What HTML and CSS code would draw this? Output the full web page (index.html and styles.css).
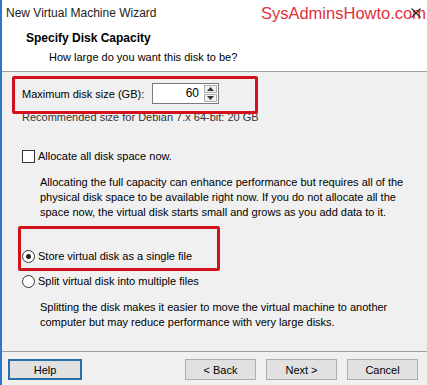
FILE: index.html
```html
<!DOCTYPE html>
<html lang="en">
<head>
    <meta charset="UTF-8">
    <title>New Virtual Machine Wizard</title>
    <link rel="stylesheet" href="styles.css">
</head>
<body>
    <div class="window">
        <!-- Header -->
        <div class="header">
            <div class="titlebar">
                <span class="title">New Virtual Machine Wizard</span>
                <span class="watermark">SysAdminsHowto.com</span>
                <svg class="close" width="10" height="10" viewBox="0 0 10 10">
                    <path d="M0.5 0.5 L9.5 9.5 M9.5 0.5 L0.5 9.5" stroke="#222" stroke-width="1.1" fill="none"/>
                </svg>
            </div>
            <div class="heading">Specify Disk Capacity</div>
            <div class="subheading">How large do you want this disk to be?</div>
        </div>

        <!-- Content -->
        <div class="content">
            <div class="size-row">
                <span>Maximum disk size (GB):</span>
                <div class="spin">
                    <div class="spin-value">60</div>
                    <div class="spin-buttons">
                        <div class="spin-btn">
                            <svg width="7" height="4" viewBox="0 0 7 4"><path d="M0 4 L3.5 0 L7 4 Z" fill="#333"/></svg>
                        </div>
                        <div class="spin-btn">
                            <svg width="7" height="4" viewBox="0 0 7 4"><path d="M0 0 L3.5 4 L7 0 Z" fill="#333"/></svg>
                        </div>
                    </div>
                </div>
            </div>
            <p class="recommend">Recommended size for Debian 7.x 64-bit: 20 GB</p>

            <label class="option check-option">
                <span class="checkbox"></span>
                <span>Allocate all disk space now.</span>
            </label>
            <p class="note">Allocating the full capacity can enhance performance but requires all of the physical disk space to be available right now. If you do not allocate all the space now, the virtual disk starts small and grows as you add data to it.</p>

            <label class="option radio-first">
                <span class="radio checked"></span>
                <span>Store virtual disk as a single file</span>
            </label>
            <label class="option">
                <span class="radio"></span>
                <span>Split virtual disk into multiple files</span>
            </label>
            <p class="note">Splitting the disk makes it easier to move the virtual machine to another computer but may reduce performance with very large disks.</p>
        </div>

        <!-- Buttons -->
        <div class="footer">
            <button class="btn btn-help">Help</button>
            <div class="footer-right">
                <button class="btn">&lt; Back</button>
                <button class="btn">Next &gt;</button>
                <button class="btn">Cancel</button>
            </div>
        </div>

        <!-- Annotation boxes -->
        <div class="mark mark-size"></div>
        <div class="mark mark-single"></div>
    </div>
</body>
</html>
```

FILE: styles.css
```css
body {
    margin: 0;
    font-family: "Liberation Sans", Arial, sans-serif;
    font-size: 11px;
    color: #000;
    background: #f0f0f0;
}

.window {
    position: relative;
    width: 427px;
    height: 385px;
    border-left: 2px solid #2b79c6;
    box-sizing: border-box;
    background: #f0f0f0;
    overflow: hidden;
}

.header {
    background: #fff;
    height: 72px;
    border-bottom: 1px solid #a0a0a0;
    box-sizing: border-box;
}

.titlebar {
    display: flex;
    align-items: center;
    height: 26px;
    padding-left: 4px;
}

.title {
    font-size: 12px;
    color: #222;
}

.watermark {
    margin-left: auto;
    font-size: 16.5px;
    color: #e0303c;
    margin-right: -15px;
}

.close {
    margin-right: 6px;
}

.heading {
    font-weight: bold;
    font-size: 12px;
    margin: 5px 0 0 24px;
}

.subheading {
    margin: 6px 0 0 47px;
}

.content {
    padding: 9px 0 0 20px;
    height: 280px;
    box-sizing: border-box;
    border-bottom: 1px solid #a0a0a0;
}

.size-row {
    display: flex;
    align-items: center;
    height: 25px;
}

.size-row span {
    width: 130px;
}

.spin {
    display: flex;
    border: 1px solid #7a7a7a;
    background: #fff;
    height: 21px;
    box-sizing: border-box;
}

.spin-value {
    width: 46px;
    text-align: right;
    padding-right: 4px;
    line-height: 19px;
    font-size: 12px;
}

.spin-buttons {
    display: flex;
    flex-direction: column;
    width: 13px;
    padding: 1px;
    gap: 1px;
}

.spin-btn {
    flex: 1;
    display: flex;
    align-items: center;
    justify-content: center;
    background: #f0f0f0;
    border: 1px solid #adadad;
}

.recommend {
    margin: 5px 0 0 0;
    color: #333;
}

.option {
    display: flex;
    align-items: center;
    gap: 3px;
    height: 14px;
}

.check-option {
    margin-top: 26px;
}

.checkbox {
    width: 11px;
    height: 11px;
    border: 1px solid #333;
    background: #fff;
}

.radio {
    width: 11px;
    height: 11px;
    border: 1px solid #333;
    border-radius: 50%;
    background: #fff;
    position: relative;
}

.radio.checked::after {
    content: "";
    position: absolute;
    left: 3px;
    top: 3px;
    width: 5px;
    height: 5px;
    border-radius: 50%;
    background: #222;
}

.note {
    margin: 12px 0 0 18px;
    line-height: 15px;
    width: 370px;
}

.radio-first {
    margin-top: 29px;
    margin-bottom: 11px;
}

.footer {
    display: flex;
    padding: 7px 9px 0 6px;
}

.footer-right {
    margin-left: auto;
    display: flex;
    gap: 10px;
}

.btn {
    width: 71px;
    height: 21px;
    font-family: inherit;
    font-size: 11px;
    background: #e1e1e1;
    border: 1px solid #adadad;
    padding: 0;
}

.btn-help {
    width: 74px;
    border: 2px solid #2b6ea8;
}

.mark {
    position: absolute;
    border: 3px solid #d0121b;
    border-radius: 2px;
}

.mark-size {
    left: 10px;
    top: 76px;
    width: 240px;
    height: 32px;
}

.mark-single {
    left: 16px;
    top: 226px;
    width: 196px;
    height: 39px;
}
```
